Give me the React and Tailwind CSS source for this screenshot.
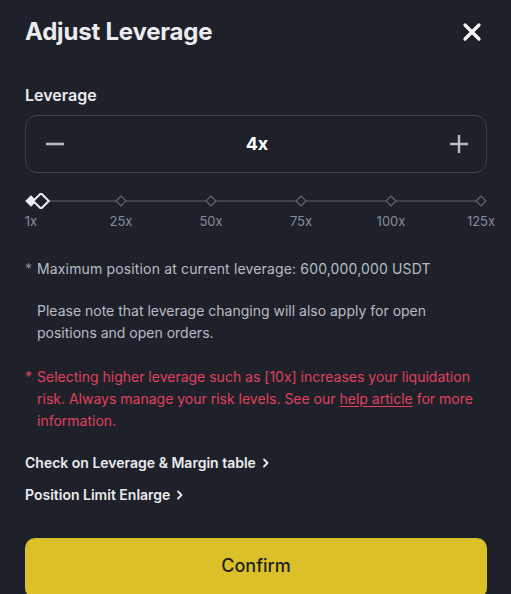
import React from "react";

function Slider() {
  const ticks = [6, 96, 186, 276, 366, 456];
  return (
    <svg width="462" height="16" viewBox="0 0 462 16" className="block">
      <line x1="6" y1="8" x2="456" y2="8" stroke="#474d57" strokeWidth="1.5" />
      <line x1="6" y1="8" x2="16" y2="8" stroke="#eaecef" strokeWidth="2" />
      {ticks.map((x, i) => (
        <rect
          key={i}
          x={x - 3.5}
          y={4.5}
          width="7"
          height="7"
          transform={`rotate(45 ${x} 8)`}
          fill={i === 0 ? "#eaecef" : "#1e2129"}
          stroke={i === 0 ? "#eaecef" : "#5e6673"}
          strokeWidth="1.2"
        />
      ))}
      <rect
        x={16 - 5.5}
        y={8 - 5.5}
        width="11"
        height="11"
        transform="rotate(45 16 8)"
        fill="#1e2129"
        stroke="#eaecef"
        strokeWidth="2"
      />
    </svg>
  );
}

function Chevron() {
  return (
    <svg width="8" height="10" viewBox="0 0 8 10" className="inline-block ml-[6px]">
      <path d="M2 1.5 L5.5 5 L2 8.5" fill="none" stroke="#eaecef" strokeWidth="1.8" strokeLinecap="round" strokeLinejoin="round" />
    </svg>
  );
}

export default function App() {
  const labels = ["1x", "25x", "50x", "75x", "100x", "125x"];
  return (
    <div className="w-[511px] h-[594px] bg-[#1e2129] overflow-hidden font-['Inter',sans-serif] text-[#eaecef]">
      <div className="pl-[25px] pr-[24px]">
        <div className="mt-[16px] h-[32px] flex items-center justify-between">
          <div className="text-[24px] font-bold leading-[32px] tracking-[-0.2px]">Adjust Leverage</div>
          <svg width="20" height="20" viewBox="0 0 20 20" className="mr-[5px]">
            <path d="M3 3 L17 17 M17 3 L3 17" stroke="#ffffff" strokeWidth="3.2" strokeLinecap="round" />
          </svg>
        </div>

        <div className="mt-[35px] text-[16px] font-semibold leading-[24px]">Leverage</div>

        <div className="mt-[8px] h-[58px] border border-[#3a404a] rounded-[12px] flex items-center justify-between pl-[19px] pr-[17px]">
          <svg width="20" height="20" viewBox="0 0 20 20">
            <path d="M1 10 H19" stroke="#b7bdc6" strokeWidth="2.6" />
          </svg>
          <div className="text-[18px] font-bold leading-[24px] text-white">4x</div>
          <svg width="20" height="20" viewBox="0 0 20 20">
            <path d="M1 10 H19 M10 1 V19" stroke="#b7bdc6" strokeWidth="2.4" />
          </svg>
        </div>

        <div className="mt-[20px] h-[16px]">
          <Slider />
        </div>

        <div className="mt-[3px] ml-[-39px] flex w-[540px]">
          {labels.map((l) => (
            <div key={l} className="w-[90px] shrink-0 text-center text-[13px] leading-[18px] text-[#848e9c]">
              {l}
            </div>
          ))}
        </div>

        <div className="mt-[28px] flex text-[14px] leading-[22px] text-[#b7bdc6] whitespace-nowrap">
          <span className="w-[12px] text-[#848e9c]">*</span>
          <span className="tracking-[0.15px]">Maximum position at current leverage: 600,000,000 USDT</span>
        </div>

        <div className="mt-[20px] pl-[12px] text-[14px] leading-[22px] text-[#b7bdc6] whitespace-nowrap">
          Please note that leverage changing will also apply for open
          <br />
          positions and open orders.
        </div>

        <div className="mt-[22px] flex text-[14px] leading-[22px] text-[#e0405e] whitespace-nowrap">
          <span className="w-[12px]">*</span>
          <span>
            Selecting higher leverage such as [10x] increases your liquidation
            <br />
            risk. Always manage your risk levels. See our{" "}
            <span className="underline underline-offset-2">help article</span> for more
            <br />
            information.
          </span>
        </div>

        <div className="mt-[21px] text-[14px] font-semibold leading-[20px] flex items-center">
          Check on Leverage &amp; Margin table
          <Chevron />
        </div>
        <div className="mt-[12px] text-[14px] font-semibold leading-[20px] flex items-center">
          Position Limit Enlarge
          <Chevron />
        </div>

        <div className="mt-[33px] h-[60px] rounded-[10px] bg-[#dcc02a] flex items-start justify-center pt-[16px]">
          <span className="text-[18px] font-medium leading-[24px] text-[#1e2026]">Confirm</span>
        </div>
      </div>
    </div>
  );
}
